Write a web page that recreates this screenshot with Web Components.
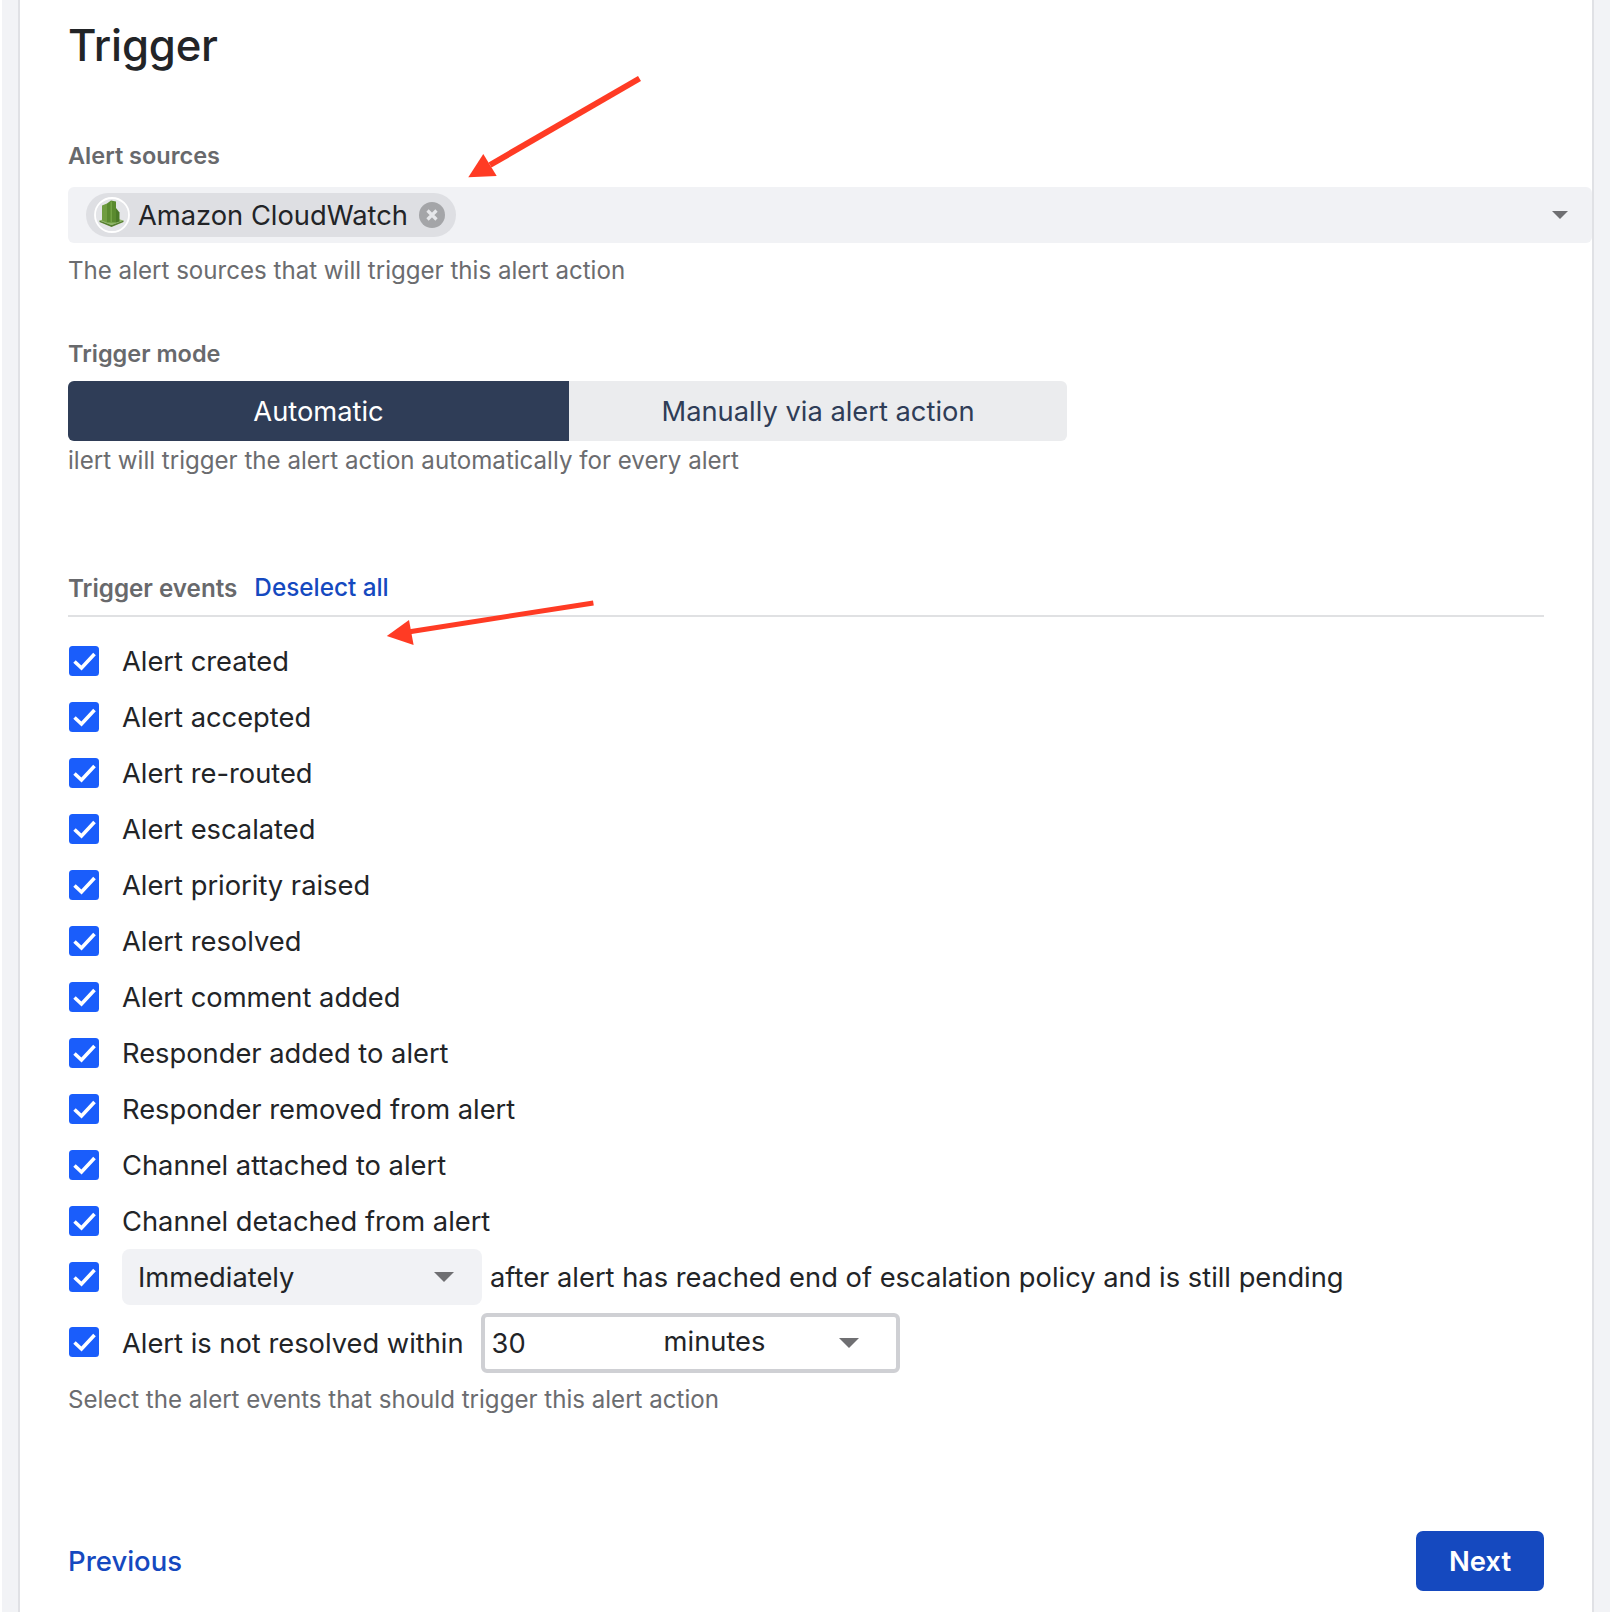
<!DOCTYPE html>
<html lang="en">
<head>
<meta charset="utf-8">
<title>Trigger</title>
<style>
	html, body { margin: 0; padding: 0; }
	body { font-family: Inter, "Liberation Sans", sans-serif; color: #222427; background: #fff; }
</style>
</head>
<body>
<trigger-page>
	<h-title>Trigger</h-title>

	<form-field label="Alert sources" hint="The alert sources that will trigger this alert action" style="margin-top: 67px">
		<multi-select>
			<source-chip>Amazon CloudWatch</source-chip>
		</multi-select>
	</form-field>

	<form-field label="Trigger mode" hint="ilert will trigger the alert action automatically for every alert" style="margin-top: 53px" tight>
		<mode-switch active="Automatic" other="Manually via alert action"></mode-switch>
	</form-field>

	<event-list>
		<event-row>Alert created</event-row>
		<event-row>Alert accepted</event-row>
		<event-row>Alert re-routed</event-row>
		<event-row>Alert escalated</event-row>
		<event-row>Alert priority raised</event-row>
		<event-row>Alert resolved</event-row>
		<event-row>Alert comment added</event-row>
		<event-row>Responder added to alert</event-row>
		<event-row>Responder removed from alert</event-row>
		<event-row>Channel attached to alert</event-row>
		<event-row>Channel detached from alert</event-row>
		<event-row>
			<plain-select>Immediately</plain-select>
			<span style="margin-left: 8px">after alert has reached end of escalation policy and is still pending</span>
		</event-row>
		<event-row tall>
			<span>Alert is not resolved within</span>
			<duration-input value="30" unit="minutes"></duration-input>
		</event-row>
	</event-list>

	<wizard-nav></wizard-nav>
</trigger-page>

<script>
(() => {
	const CARET = `<svg width="20" height="10" viewBox="0 0 20 10"><path d="M0 0h20L10 10z" fill="#6f6f72"/></svg>`;

	/* ページ全体の枠と、矢印（内容の上に重なる注釈） */
	class TriggerPage extends HTMLElement {
		constructor() {
			super();
			this.attachShadow({mode: 'open'}).innerHTML = `
				<style>
					:host {
						display: block;
						position: relative;
						width: 1610px;
						height: 1612px;
						overflow: hidden;
						background: #f2f3f6;
						box-shadow: inset 2px 0 0 #fff;
					}
					.frame {
						box-sizing: border-box;
						margin-left: 18px;
						width: 1576px;
						height: 100%;
						background: #fff;
						border: solid #e0e1e5;
						border-width: 0 2px;
						padding: 0 0 0 48px;
					}
					svg { position: absolute; left: 0; top: 0; pointer-events: none; }
				</style>
				<div class="frame"><slot></slot></div>
				<svg width="1610" height="1612" viewBox="0 0 1610 1612">
					<path d="M639.500 78.500L490 165" stroke="#ff3b24" stroke-width="6" fill="none"/>
					<path d="M468.300 177.300L483.300 154L496.700 176z" fill="#ff3b24"/>
					<path d="M593.400 603L409.700 631.700" stroke="#ff3b24" stroke-width="5" fill="none"/>
					<path d="M386.800 636L409 620L413.600 645z" fill="#ff3b24"/>
				</svg>
			`;
		}
	}

	class HTitle extends HTMLElement {
		constructor() {
			super();
			this.attachShadow({mode: 'open'}).innerHTML = `
				<style>
					:host {
						display: block;
						font-size: 43.700px;
						line-height: 56px;
						padding-top: 18px;
						font-weight: 500;
						color: #222427;
						letter-spacing: -.2px;
					}
				</style>
				<slot></slot>
			`;
		}
	}

	class FormField extends HTMLElement {
		constructor() {
			super();
			const tight = this.hasAttribute('tight');
			this.attachShadow({mode: 'open'}).innerHTML = `
				<style>
					:host { display: block; }
					.label {
						font-size: 23.500px;
						line-height: 30px;
						font-weight: 600;
						color: #68696c;
						margin-bottom: ${tight ? 12 : 16}px;
					}
					.hint {
						font-size: 24.100px;
						line-height: 30px;
						color: #6b6c6f;
						margin-top: ${tight ? 5 : 13}px;
					}
				</style>
				<div class="label">${this.getAttribute('label')}</div>
				<slot></slot>
				<div class="hint">${this.getAttribute('hint')}</div>
			`;
		}
	}

	class MultiSelect extends HTMLElement {
		constructor() {
			super();
			this.attachShadow({mode: 'open'}).innerHTML = `
				<style>
					:host {
						display: flex;
						align-items: center;
						justify-content: space-between;
						height: 56px;
						box-sizing: border-box;
						background: #f1f2f5;
						border-radius: 6px;
						padding: 0 24px 0 18px;
					}
					svg { width: 16px; height: 8px; }
				</style>
				<div><slot></slot></div>
				${CARET}
			`;
		}
	}

	class SourceChip extends HTMLElement {
		constructor() {
			super();
			this.attachShadow({mode: 'open'}).innerHTML = `
				<style>
					:host {
						display: inline-flex;
						align-items: center;
						height: 44px;
						box-sizing: border-box;
						background: #dedfe3;
						border-radius: 22px;
						padding: 0 11px 0 8px;
						font-size: 27.300px;
						color: #222427;
						vertical-align: top;
					}
					.logo { width: 36px; height: 36px; flex: none; margin-right: 8px; }
					.x { width: 26px; height: 26px; flex: none; margin-left: 11px; }
				</style>
				<svg class="logo" viewBox="0 0 36 36">
					<circle cx="18" cy="18" r="17" fill="#e4e5e8" stroke="#fff" stroke-width="1.800"/>
					<path d="M5.500 23.500L12 21.500H23L29.500 23.500L17.500 28z" fill="#8fb865"/>
					<path d="M5.500 23.500L17.500 28L29.500 23.500V25L17.500 30L5.500 25z" fill="#557f2d"/>
					<path d="M8 8.500L13 6.500V25.500L8 23.500z" fill="#6f9c40"/>
					<path d="M13 6.500L17 3.500L22 4.500V25.500H13z" fill="#5a8a2f"/>
					<path d="M16.500 4.500h1.500V25h-1.500z" fill="#74a345"/>
					<path d="M22 11l3.500 4.500V24.500L22 25.500z" fill="#4b7a28"/>
				</svg>
				<span><slot></slot></span>
				<svg class="x" viewBox="0 0 26 26">
					<circle cx="13" cy="13" r="13" fill="#a4a5a8"/>
					<path d="M8.500 8.500l9 9M17.500 8.500l-9 9" stroke="#e6e7ea" stroke-width="3.200" fill="none"/>
				</svg>
			`;
		}
	}

	class ModeSwitch extends HTMLElement {
		constructor() {
			super();
			this.attachShadow({mode: 'open'}).innerHTML = `
				<style>
					:host {
						display: grid;
						grid-template-columns: 501px 498px;
						width: 999px;
						height: 60px;
						font-size: 27.300px;
						border-radius: 6px;
						overflow: hidden;
						background: #ebecee;
						color: #2f3d57;
					}
					div { display: flex; align-items: center; justify-content: center; }
					.on { background: #2f3d57; color: #fff; }
				</style>
				<div class="on">${this.getAttribute('active')}</div>
				<div>${this.getAttribute('other')}</div>
			`;
		}
	}

	class EventList extends HTMLElement {
		constructor() {
			super();
			this.attachShadow({mode: 'open'}).innerHTML = `
				<style>
					:host { display: block; margin-top: 97px; }
					.head {
						display: flex;
						align-items: baseline;
						gap: 17px;
						width: 1476px;
						height: 44px;
						box-sizing: border-box;
						border-bottom: 2px solid #e0e1e3;
						font-size: 24.200px;
						line-height: 30px;
					}
					.title { font-weight: 600; color: #68696c; }
					.link { color: #1549bf; font-size: 24.300px; font-weight: 500; position: relative; top: -1px; }
					.rows { display: grid; grid-auto-rows: 56px; padding-top: 16px; }
					.hint { font-size: 24.100px; line-height: 30px; color: #6b6c6f; margin-top: 24px; }
				</style>
				<div class="head"><span class="title">Trigger events</span><span class="link">Deselect all</span></div>
				<div class="rows"><slot></slot></div>
				<div class="hint">Select the alert events that should trigger this alert action</div>
			`;
		}
	}

	class EventRow extends HTMLElement {
		constructor() {
			super();
			this.attachShadow({mode: 'open'}).innerHTML = `
				<style>
					:host {
						display: flex;
						align-items: center;
						font-size: 27.300px;
						color: #222427;
						white-space: nowrap;
					}
					:host([tall]) { height: 64px; margin-top: 6px; margin-bottom: -14px; }
					svg { width: 30px; height: 30px; flex: none; margin: 0 23px 0 1px; }
					:host([tall]) svg { margin-top: -3px; }
					.body { display: flex; align-items: center; }
				</style>
				<svg viewBox="0 0 30 30">
					<rect width="30" height="30" rx="3.500" fill="#1a5dfb"/>
					<path d="M5.500 15.500L12.500 22L25.500 8" fill="none" stroke="#fff" stroke-width="3.600"/>
				</svg>
				<div class="body"><slot></slot></div>
			`;
		}
	}

	class PlainSelect extends HTMLElement {
		constructor() {
			super();
			this.attachShadow({mode: 'open'}).innerHTML = `
				<style>
					:host {
						display: flex;
						align-items: center;
						justify-content: space-between;
						width: 360px;
						height: 56px;
						box-sizing: border-box;
						background: #f1f2f5;
						border-radius: 8px;
						padding: 0 28px 0 16px;
					}
				</style>
				<span><slot></slot></span>
				${CARET}
			`;
		}
	}

	class DurationInput extends HTMLElement {
		constructor() {
			super();
			this.attachShadow({mode: 'open'}).innerHTML = `
				<style>
					:host {
						display: grid;
						grid-template-columns: 172px 1fr auto;
						align-items: center;
						box-sizing: border-box;
						width: 419px;
						height: 60px;
						margin-left: 17px;
						border: 4px solid #cfd0d4;
						border-radius: 6px;
						padding: 0 37px 0 7px;
					}
					.unit { position: relative; top: -2px; }
				</style>
				<span>${this.getAttribute('value')}</span>
				<span class="unit">${this.getAttribute('unit')}</span>
				${CARET}
			`;
		}
	}

	class WizardNav extends HTMLElement {
		constructor() {
			super();
			this.attachShadow({mode: 'open'}).innerHTML = `
				<style>
					:host {
						display: flex;
						align-items: center;
						justify-content: space-between;
						width: 1476px;
						margin-top: 116px;
					}
					.prev { font-size: 27.500px; font-weight: 500; color: #1549bf; }
					.next {
						display: flex;
						align-items: center;
						justify-content: center;
						width: 128px;
						height: 60px;
						background: #1549bf;
						color: #fff;
						font-size: 27.400px;
						font-weight: 600;
						border-radius: 7px;
					}
				</style>
				<span class="prev">Previous</span>
				<span class="next">Next</span>
			`;
		}
	}

	customElements.define('trigger-page', TriggerPage);
	customElements.define('h-title', HTitle);
	customElements.define('form-field', FormField);
	customElements.define('multi-select', MultiSelect);
	customElements.define('source-chip', SourceChip);
	customElements.define('mode-switch', ModeSwitch);
	customElements.define('event-list', EventList);
	customElements.define('event-row', EventRow);
	customElements.define('plain-select', PlainSelect);
	customElements.define('duration-input', DurationInput);
	customElements.define('wizard-nav', WizardNav);
})();
</script>
</body>
</html>
